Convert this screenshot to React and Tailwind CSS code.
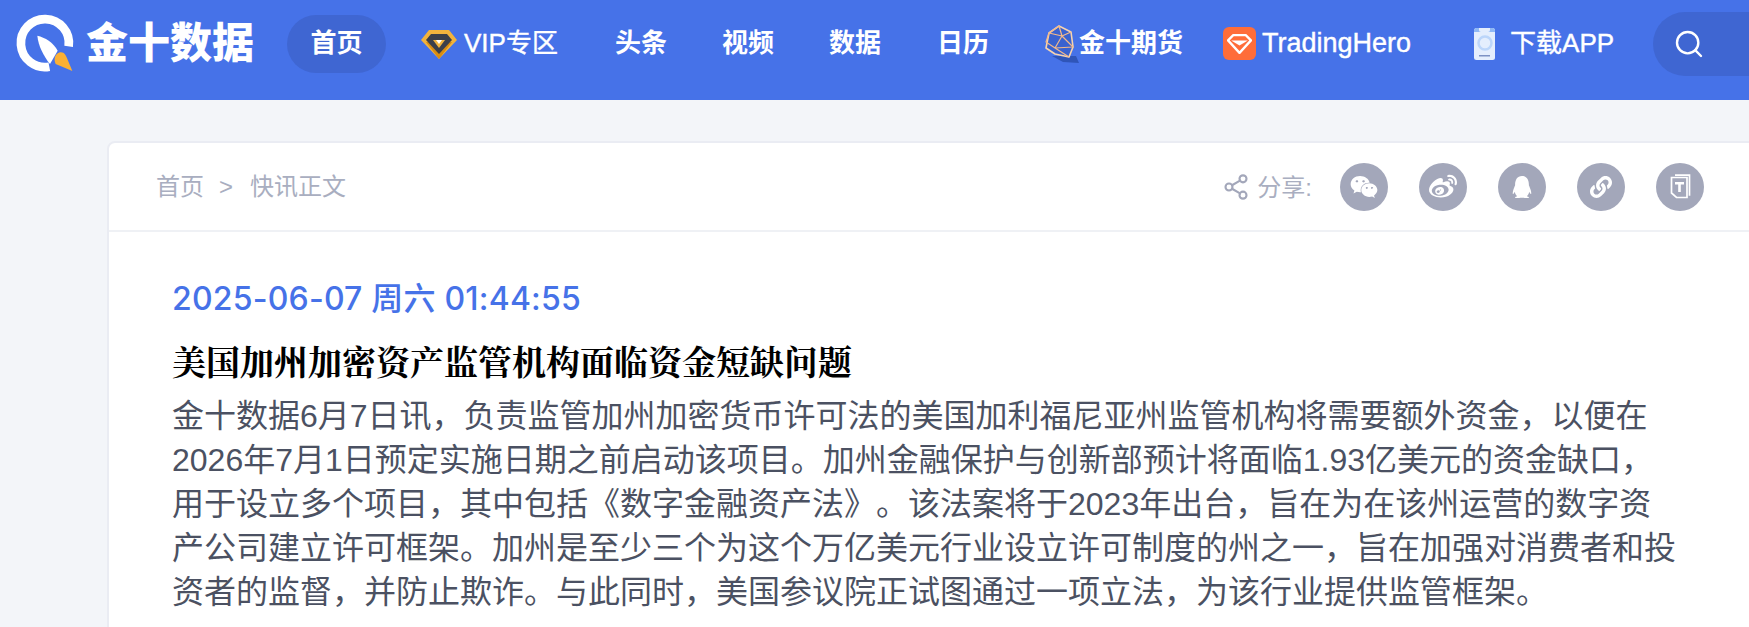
import React from 'react';
import { Search, Share2 } from 'lucide-react';
import { FaWeixin, FaWeibo, FaQq, FaLink } from 'react-icons/fa';

function Logo() {
    return (
        <svg width="70" height="70" viewBox="0 0 210 210" className="shrink-0">
            <path d="M176 112A72 72 0 1 0 118 173" fill="none" stroke="#fff" strokeWidth="26" />
            <path d="M82 80C105 85 130 100 143 125L120 165C100 140 85 110 82 80z" fill="#fff" />
            <path d="M187 186L137 165C130 150 135 135 150 130C163 128 168 140 172 150z" fill="#fbb034" />
        </svg>
    );
}

function VipIcon() {
    return (
        <svg width="36" height="30" viewBox="0 0 36 30" className="shrink-0">
            <path d="M8 1h20l8 10-18 19L0 11z" fill="#f2b33d" />
            <path d="M18 30L5 13h26z" fill="#d98c10" />
            <path d="M10 5h16l5 6-13 14L5 11z" fill="#3b3f4a" />
            <path d="M12 11h12l-6 8z" fill="#f2b33d" />
            <path d="M15 11h6l-3 4z" fill="#fff" />
        </svg>
    );
}

function FuturesIcon() {
    return (
        <svg width="34" height="38" viewBox="0 0 34 38" className="shrink-0">
            <path d="M7 31l24 0 3 7-16-1z" fill="#2f55b8" />
            <path d="M14 1l12 6 2 15-4 10-14-3-9-6 3-15z" fill="#3a62cf" stroke="#f6d3b0" strokeWidth="1.6" strokeLinejoin="round" />
            <path d="M4 8l10-7 3 10 11 11-18 1-9-6zM17 11L10 23l14 9M26 7l-9 4M4 8l13 3" fill="none" stroke="#f3b98a" strokeWidth="1.2" strokeLinejoin="round" />
        </svg>
    );
}

function HeroIcon() {
    return (
        <div className="w-[33px] h-[33px] rounded-[6px] bg-[#ff6d39] flex items-center justify-center shrink-0">
            <svg width="25" height="21" viewBox="0 0 24 20">
                <path d="M6 2h12l5 5-11 12L1 7z" fill="none" stroke="#fff" strokeWidth="2.2" strokeLinejoin="round" />
                <path d="M4 7h16l-8 5z" fill="#fff" />
            </svg>
        </div>
    );
}

function PhoneIcon() {
    return (
        <svg width="21" height="32" viewBox="0 0 21 32" className="shrink-0">
            <rect width="21" height="32" rx="2.5" fill="#e4eefd" />
            <path d="M0 3a2.5 2.5 0 0 1 2.5-3h16A2.5 2.5 0 0 1 21 3v1H0z" fill="#8fb8f5" />
            <path d="M5 0h11v2a2 2 0 0 1-2 2H7a2 2 0 0 1-2-2z" fill="#e4eefd" />
            <circle cx="11" cy="15" r="6.5" fill="none" stroke="#bcd6fa" strokeWidth="2.5" />
            <rect x="5" y="27" width="11" height="1.5" fill="#7d92c4" />
        </svg>
    );
}

function DocIcon() {
    return (
        <svg width="21" height="25" viewBox="0 0 21 25" fill="none" stroke="#fff">
            <path d="M5 1.2h14.5v20.5M2.8 3.5H17v20H6.5L1.5 19V3.5z" strokeWidth="1.7" />
            <path d="M5 8h9v2.4h-3.2V18H8.2v-7.6H5z" fill="#fff" stroke="none" />
        </svg>
    );
}

function ShareButton({ children }) {
    return (
        <div className="w-[48px] h-[48px] rounded-full bg-[#a3a7ba] flex items-center justify-center text-white">
            {children}
        </div>
    );
}

export default function App() {
    return (
        <div className="h-[627px] bg-[#f3f5f9] font-['Liberation_Sans','Noto_Sans_CJK_SC',sans-serif] overflow-hidden">
            <header className="h-[100px] bg-[#4672e8] flex items-center pl-[10px] pb-[13px] text-white text-[26px] whitespace-nowrap">
                <Logo />
                <div className="ml-[6px] w-[171px] text-[42px] leading-none font-black">金十数据</div>
                <div className="ml-[30px] w-[99px] h-[58px] rounded-full bg-[#3f66d2] flex items-center justify-center font-bold">首页</div>
                <div className="ml-[35px] flex items-center gap-[7px] [-webkit-text-stroke:0.4px_#fff]"><VipIcon />VIP专区</div>
                <div className="ml-[57px] font-bold">头条</div>
                <div className="ml-[55px] font-bold">视频</div>
                <div className="ml-[55px] font-bold">数据</div>
                <div className="ml-[56px] font-bold">日历</div>
                <div className="ml-[56px] flex items-center font-bold"><FuturesIcon />金十期货</div>
                <div className="ml-[40px] flex items-center gap-[6px] text-[27px] [-webkit-text-stroke:0.4px_#fff]"><HeroIcon />TradingHero</div>
                <div className="ml-[63px] flex items-center gap-[15px] [-webkit-text-stroke:0.4px_#fff]"><PhoneIcon />下载APP</div>
                <div className="ml-[39px] flex-1 h-[64px] rounded-l-full bg-[#3f66d2] pl-[20px] flex items-center">
                    <Search size={32} strokeWidth={1.8} />
                </div>
            </header>

            <main className="h-[600px] ml-[107px] -mr-[10px] mt-[41px] bg-white rounded-tl-lg border-2 border-[#eaecf3]">
                <div className="h-[89px] border-b-2 border-[#eff1f5] flex items-center justify-between pl-[47px] pr-[53px] text-[#a9aec0] text-[24px]">
                    <div className="flex items-center">
                        <span>首页</span>
                        <span className="ml-[15px]">&gt;</span>
                        <span className="ml-[17px]">快讯正文</span>
                    </div>
                    <div className="flex items-center gap-[31px]">
                        <div className="flex items-center gap-[7px] mr-[-3px]">
                            <Share2 size={28} strokeWidth={1.8} className="text-[#a3a7ba]" />
                            <span className="pt-[3px]">分享:</span>
                        </div>
                        <ShareButton><FaWeixin size={28} /></ShareButton>
                        <ShareButton><FaWeibo size={28} /></ShareButton>
                        <ShareButton><FaQq size={22} /></ShareButton>
                        <ShareButton><FaLink size={22} /></ShareButton>
                        <ShareButton><DocIcon /></ShareButton>
                    </div>
                </div>
                <article className="pl-[63px] pt-[45px] pr-[60px]">
                    <div className="text-[#4672e8] text-[32px] leading-[44px] tracking-[0.2px] font-medium whitespace-nowrap font-['Inter','Noto_Sans_CJK_SC',sans-serif]">2025-06-07 周六 01:44:55</div>
                    <h1 className="mt-[18px] text-black text-[34px] leading-[44px] font-bold font-['Noto_Serif_CJK_SC','Noto_Sans_CJK_SC',serif]">美国加州加密资产监管机构面临资金短缺问题</h1>
                    <p className="mt-[11px] w-[1510px] text-[#4b5162] text-[32px] leading-[44px] [text-spacing-trim:space-all]">
                        金十数据6月7日讯，负责监管加州加密货币许可法的美国加利福尼亚州监管机构将需要额外资金，以便在2026年7月1日预定实施日期之前启动该项目。加州金融保护与创新部预计将面临1.93亿美元的资金缺口，用于设立多个项目，其中包括《数字金融资产法》。该法案将于2023年出台，旨在为在该州运营的数字资产公司建立许可框架。加州是至少三个为这个万亿美元行业设立许可制度的州之一，旨在加强对消费者和投资者的监督，并防止欺诈。与此同时，美国参议院正试图通过一项立法，为该行业提供监管框架。
                    </p>
                </article>
            </main>
        </div>
    );
}
